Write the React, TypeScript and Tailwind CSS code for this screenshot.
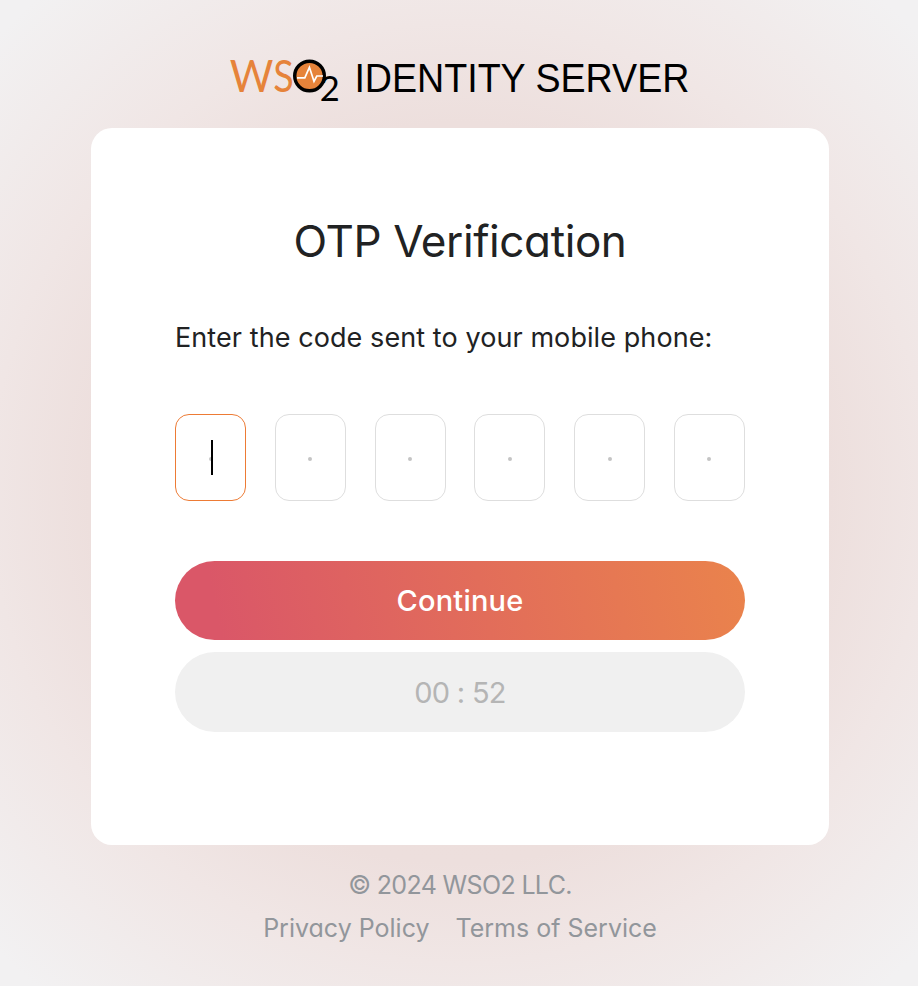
import React from "react";

function Logo() {
  return (
    <svg width="464" height="72" viewBox="228 42 464 72" role="img" aria-label="WSO2 Identity Server" className="ml-[2px] shrink-0 overflow-visible">
      <g fill="#e6833a" fontFamily="Lato, sans-serif" fontSize="44">
        <text x="229.7" y="92" textLength="43.6" lengthAdjust="spacingAndGlyphs">W</text>
        <text x="273.3" y="92" textLength="20.5" lengthAdjust="spacingAndGlyphs">S</text>
      </g>
      <circle cx="309.5" cy="76" r="14.8" fill="#e6833a" stroke="#000" strokeWidth="3.4" />
      <path d="M297 77.8H304.8L309.4 67.3L314 81.3L316.8 76H323" fill="none" stroke="#fff" strokeWidth="1.7" />
      <text x="319.8" y="101" fontFamily="Lato, sans-serif" fontSize="35" textLength="20" lengthAdjust="spacingAndGlyphs">2</text>
      <text x="354.4" y="92" fontFamily="'Liberation Sans', Arial, sans-serif" fontSize="40" textLength="335" lengthAdjust="spacingAndGlyphs">IDENTITY SERVER</text>
    </svg>
  );
}

export default function App() {
  return (
    <div className="flex h-[986px] w-[918px] flex-col items-center overflow-hidden bg-[radial-gradient(circle_at_50%_50%,#eddcda_0px,#eddfdd_370px,#f0e6e5_470px,#f2f1f2_650px)] pt-[42px] font-['Inter',sans-serif] [font-feature-settings:'cv11']">
      <Logo />
      <main className="mt-[14px] ml-[2px] flex h-[717px] w-[738px] shrink-0 flex-col rounded-[21px] bg-white px-[84px] pt-[83px]">
        <h1 className="h-[60px] whitespace-nowrap text-center text-[44px] leading-[60px] tracking-[-0.4px] text-[#212223]">OTP Verification</h1>
        <p className="mt-[49px] h-[36px] whitespace-nowrap text-[27px] leading-[36px] tracking-[0.08px] text-[#212223]">Enter the code sent to your mobile phone:</p>
        <div className="mt-[58px] flex justify-between">
          {[0, 1, 2, 3, 4, 5].map((i) => (
            <div key={i} className={`flex h-[87px] w-[71px] items-center justify-center rounded-[14px] border pt-[3px] ${i === 0 ? "border-[#ed7b35]" : "border-[#dedede]"}`}>
              <div className="relative size-[4px] rounded-full bg-[#c4c4c4]">
                {i === 0 && <span className="absolute -top-[17px] left-[2px] h-[35px] w-[2px] bg-black" />}
              </div>
            </div>
          ))}
        </div>
        <button className="mt-[60px] h-[79px] shrink-0 rounded-full bg-[linear-gradient(78deg,#da5768_8%,#ea834c_100%)] pt-[1px] text-[29px] font-medium tracking-[0.2px] text-white">Continue</button>
        <button className="mt-[12px] h-[80px] shrink-0 rounded-full bg-[#f0f0f0] pt-[2px] text-[29px] tracking-[-0.7px] text-[#b5b5b5]" disabled>00 : 52</button>
      </main>
      <footer className="mt-[19px] ml-[2px] flex flex-col items-center text-[25px] leading-[43px] text-[#92969b]">
        <span className="tracking-[-0.65px]">© 2024 WSO2 LLC.</span>
        <div className="flex gap-[26px]">
          <a>Privacy Policy</a>
          <a>Terms of Service</a>
        </div>
      </footer>
    </div>
  );
}
